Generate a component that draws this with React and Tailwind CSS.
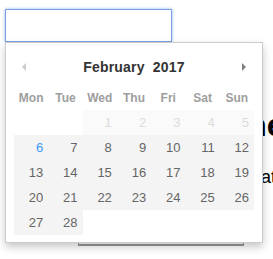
import React from "react";

const weekDays = ["Mon", "Tue", "Wed", "Thu", "Fri", "Sat", "Sun"];

function buildCells() {
  // Feb 2017 starts on a Wednesday; 1-5 shown as disabled
  const cells = [null, null];
  for (let d = 1; d <= 28; d++) cells.push(d);
  return cells;
}

function DayCell({ day }) {
  if (day === null) return <div className="h-[25px]" />;
  let cls = "h-[25px] leading-[25px] text-right pr-[5px] text-[13px] ";
  if (day <= 5) cls += "bg-[#fafafa] text-[#dcdcdc]";
  else if (day === 6) cls += "bg-[#f4f4f4] text-[#3b99fc]";
  else cls += "bg-[#f4f4f4] text-[#666]";
  return <div className={cls}>{day}</div>;
}

function Calendar() {
  return (
    <div className="absolute left-[5px] top-[42px] w-[258px] border border-[#cccccc] bg-white shadow-[0_4px_8px_rgba(0,0,0,0.22)] px-[8px] pt-[14px] pb-[7px]">
      <div className="flex items-center justify-between h-[20px] px-[8px]">
        <svg width="4" height="8" viewBox="0 0 4 8">
          <polygon points="4,0 0,4 4,8" fill="#cccccc" />
        </svg>
        <span className="text-[14px] font-bold text-[#333] tracking-[0.2px]">February&nbsp;&nbsp;2017</span>
        <svg width="4" height="8" viewBox="0 0 4 8">
          <polygon points="0,0 4,4 0,8" fill="#808080" />
        </svg>
      </div>
      <div className="grid grid-cols-7 mt-[13px] h-[16px]">
        {weekDays.map((w) => (
          <div key={w} className="text-center text-[12px] leading-[16px] font-bold text-[#9e9e9e]">
            {w}
          </div>
        ))}
      </div>
      <div className="grid grid-cols-7 mt-[4px]">
        {buildCells().map((d, i) => (
          <DayCell key={i} day={d} />
        ))}
      </div>
    </div>
  );
}

export default function App() {
  return (
    <div className="relative w-[273px] h-[259px] overflow-hidden bg-white font-['Liberation_Sans',Arial,sans-serif]">
      <div className="pt-[9px] pl-[5px]">
        <input
          type="text"
          className="block w-[167px] h-[33px] border border-[#7a9fe6] shadow-[0_0_3px_rgba(100,150,235,0.7)] outline-none bg-white"
        />
      </div>
      <h2 className="mt-[67px] ml-[201px] whitespace-nowrap text-[32px] leading-none font-bold text-black">
        Inline
      </h2>
      <p className="mt-[27px] ml-[219px] whitespace-nowrap text-[18px] leading-none text-black">
        Format
      </p>
      <div className="mt-[30px] ml-[78px] w-[166px] h-[30px] border-x border-b-2 border-[#999]" />
      <Calendar />
    </div>
  );
}
